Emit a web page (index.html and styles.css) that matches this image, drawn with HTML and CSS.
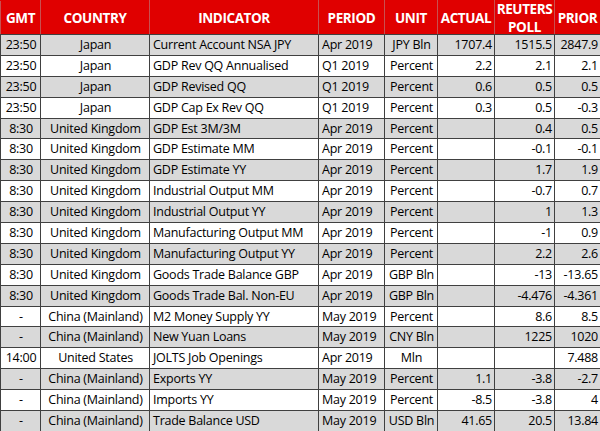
FILE: index.html
```html
<!DOCTYPE html>
<html>
<head>
<meta charset="utf-8">
<link rel="stylesheet" href="styles.css">
</head>
<body>
<table class="cal">
  <colgroup>
    <col class="c-gmt"><col class="c-country"><col class="c-ind"><col class="c-period"><col class="c-unit"><col class="c-act"><col class="c-poll"><col class="c-prior">
  </colgroup>
  <thead>
    <tr>
      <th>GMT</th><th>COUNTRY</th><th>INDICATOR</th><th>PERIOD</th><th>UNIT</th><th>ACTUAL</th><th><div class="two"><span>REUTERS</span><span>POLL</span></div></th><th>PRIOR</th>
    </tr>
  </thead>
  <tbody>
    <tr><td class="ctr">23:50</td><td class="ctr">Japan</td><td>Current Account NSA JPY</td><td>Apr 2019</td><td class="ctr">JPY Bln</td><td class="num">1707.4</td><td class="num">1515.5</td><td class="num">2847.9</td></tr>
    <tr><td class="ctr">23:50</td><td class="ctr">Japan</td><td>GDP Rev QQ Annualised</td><td>Q1 2019</td><td class="ctr">Percent</td><td class="num">2.2</td><td class="num">2.1</td><td class="num">2.1</td></tr>
    <tr><td class="ctr">23:50</td><td class="ctr">Japan</td><td>GDP Revised QQ</td><td>Q1 2019</td><td class="ctr">Percent</td><td class="num">0.6</td><td class="num">0.5</td><td class="num">0.5</td></tr>
    <tr><td class="ctr">23:50</td><td class="ctr">Japan</td><td>GDP Cap Ex Rev QQ</td><td>Q1 2019</td><td class="ctr">Percent</td><td class="num">0.3</td><td class="num">0.5</td><td class="num">-0.3</td></tr>
    <tr><td class="ctr">8:30</td><td class="ctr">United Kingdom</td><td>GDP Est 3M/3M</td><td>Apr 2019</td><td class="ctr">Percent</td><td class="num"></td><td class="num">0.4</td><td class="num">0.5</td></tr>
    <tr><td class="ctr">8:30</td><td class="ctr">United Kingdom</td><td>GDP Estimate MM</td><td>Apr 2019</td><td class="ctr">Percent</td><td class="num"></td><td class="num">-0.1</td><td class="num">-0.1</td></tr>
    <tr><td class="ctr">8:30</td><td class="ctr">United Kingdom</td><td>GDP Estimate YY</td><td>Apr 2019</td><td class="ctr">Percent</td><td class="num"></td><td class="num">1.7</td><td class="num">1.9</td></tr>
    <tr><td class="ctr">8:30</td><td class="ctr">United Kingdom</td><td>Industrial Output MM</td><td>Apr 2019</td><td class="ctr">Percent</td><td class="num"></td><td class="num">-0.7</td><td class="num">0.7</td></tr>
    <tr><td class="ctr">8:30</td><td class="ctr">United Kingdom</td><td>Industrial Output YY</td><td>Apr 2019</td><td class="ctr">Percent</td><td class="num"></td><td class="num">1</td><td class="num">1.3</td></tr>
    <tr><td class="ctr">8:30</td><td class="ctr">United Kingdom</td><td>Manufacturing Output MM</td><td>Apr 2019</td><td class="ctr">Percent</td><td class="num"></td><td class="num">-1</td><td class="num">0.9</td></tr>
    <tr><td class="ctr">8:30</td><td class="ctr">United Kingdom</td><td>Manufacturing Output YY</td><td>Apr 2019</td><td class="ctr">Percent</td><td class="num"></td><td class="num">2.2</td><td class="num">2.6</td></tr>
    <tr><td class="ctr">8:30</td><td class="ctr">United Kingdom</td><td>Goods Trade Balance GBP</td><td>Apr 2019</td><td class="ctr">GBP Bln</td><td class="num"></td><td class="num">-13</td><td class="num">-13.65</td></tr>
    <tr><td class="ctr">8:30</td><td class="ctr">United Kingdom</td><td>Goods Trade Bal. Non-EU</td><td>Apr 2019</td><td class="ctr">GBP Bln</td><td class="num"></td><td class="num">-4.476</td><td class="num">-4.361</td></tr>
    <tr><td class="ctr">-</td><td class="ctr">China (Mainland)</td><td>M2 Money Supply YY</td><td>May 2019</td><td class="ctr">Percent</td><td class="num"></td><td class="num">8.6</td><td class="num">8.5</td></tr>
    <tr><td class="ctr">-</td><td class="ctr">China (Mainland)</td><td>New Yuan Loans</td><td>May 2019</td><td class="ctr">CNY Bln</td><td class="num"></td><td class="num">1225</td><td class="num">1020</td></tr>
    <tr><td class="ctr">14:00</td><td class="ctr">United States</td><td>JOLTS Job Openings</td><td>Apr 2019</td><td class="ctr">Mln</td><td class="num"></td><td class="num"></td><td class="num">7.488</td></tr>
    <tr><td class="ctr">-</td><td class="ctr">China (Mainland)</td><td>Exports YY</td><td>May 2019</td><td class="ctr">Percent</td><td class="num">1.1</td><td class="num">-3.8</td><td class="num">-2.7</td></tr>
    <tr><td class="ctr">-</td><td class="ctr">China (Mainland)</td><td>Imports YY</td><td>May 2019</td><td class="ctr">Percent</td><td class="num">-8.5</td><td class="num">-3.8</td><td class="num">4</td></tr>
    <tr><td class="ctr">-</td><td class="ctr">China (Mainland)</td><td>Trade Balance USD</td><td>May 2019</td><td class="ctr">USD Bln</td><td class="num">41.65</td><td class="num">20.5</td><td class="num">13.84</td></tr>
  </tbody>
</table>
</body>
</html>
```

FILE: styles.css
```css
html, body {
  margin: 0;
  padding: 0;
  background: #ffffff;
}

.cal {
  width: 600px;
  table-layout: fixed;
  border-collapse: collapse;
  font-family: "Open Sans", "Liberation Sans", sans-serif;
  font-size: 12.5px;
  letter-spacing: -0.25px;
  color: #000000;
}

.c-gmt { width: 40px; }
.c-country { width: 109px; }
.c-ind { width: 169px; }
.c-period { width: 66px; }
.c-unit { width: 53px; }
.c-act { width: 57px; }
.c-poll { width: 60px; }
.c-prior { width: 46px; }

.cal th {
  background: #e00000;
  color: #ffffff;
  font-weight: 700;
  font-size: 13.5px;
  letter-spacing: -0.4px;
  line-height: 16px;
  height: 33px;
  padding: 0;
  text-align: center;
  border: 1px solid #c85050;
  border-top-color: #e00000;
  border-bottom-color: #404040;
}

.two {
  display: flex;
  flex-direction: column;
  align-items: center;
  gap: 4px;
  line-height: 14px;
}

.cal td {
  height: 19.9px;
  padding: 0 2px 0 3px;
  border: 1px solid #404040;
  white-space: nowrap;
  overflow: hidden;
  line-height: 18px;
}

.cal tbody tr:nth-child(odd) td {
  background: #d9d9d9;
}

.ctr { text-align: center; }
.num { text-align: right; }
```
